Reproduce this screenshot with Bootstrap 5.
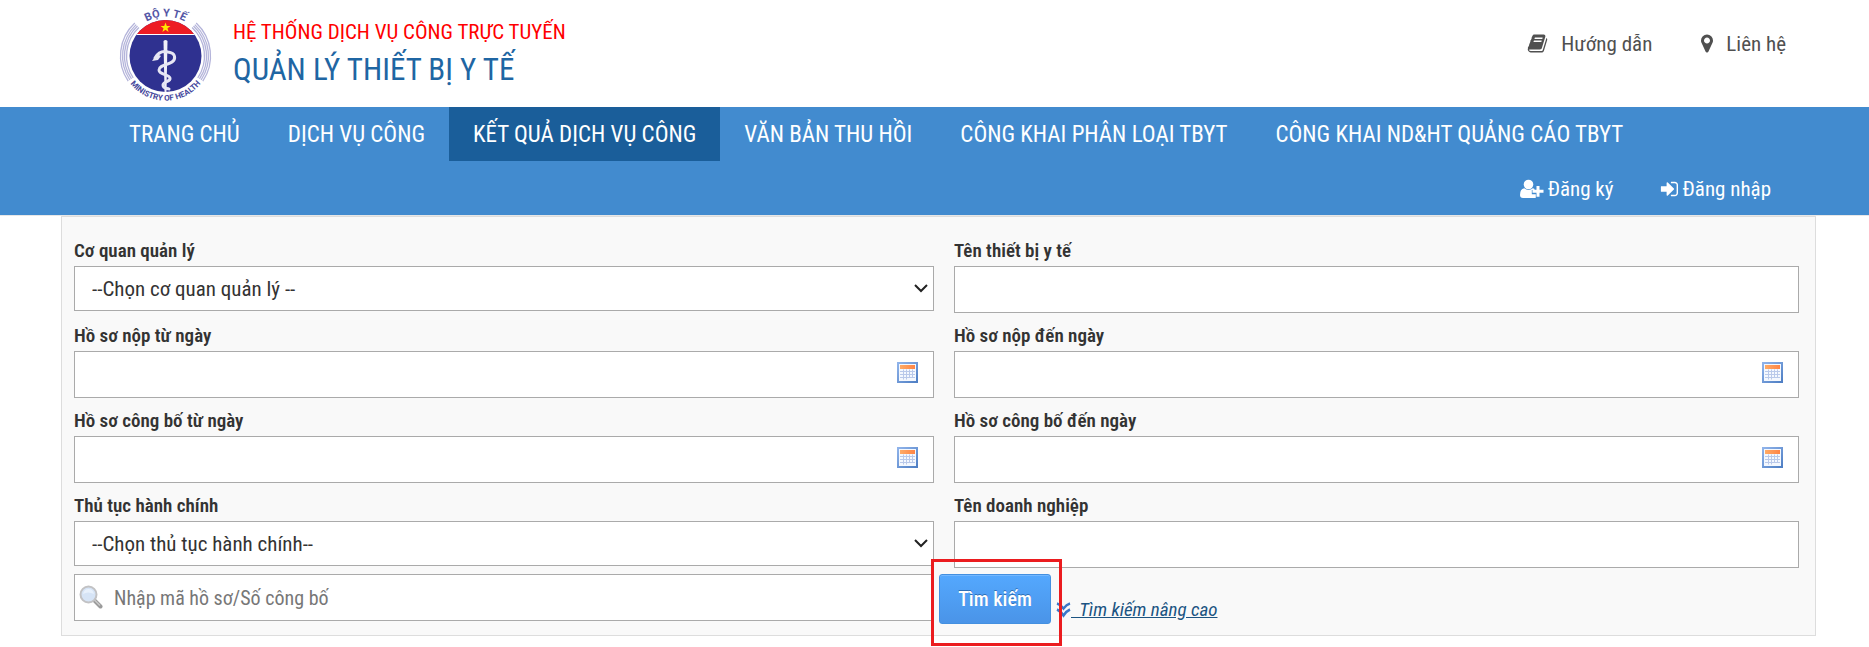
<!DOCTYPE html>
<html lang="vi">
<head>
<meta charset="utf-8">
<meta name="viewport" content="width=device-width, initial-scale=1">
<title>Quản lý thiết bị y tế</title>
<link rel="stylesheet" href="https://cdn.jsdelivr.net/npm/bootstrap@5.3.0/dist/css/bootstrap.min.css">
<script src="https://cdn.jsdelivr.net/npm/bootstrap@5.3.0/dist/js/bootstrap.bundle.min.js"></script>
<style>
body{font-family:"Roboto Condensed",Roboto,sans-serif;font-size:20px;line-height:24px;color:#333;background:#fff}
a{text-decoration:none}
.site-head{padding:10px 83px 6px 120px}
.emblem{overflow:visible}
.brand-text{margin:0 0 4px 22px}
.brand-sys{color:#f00;font-size:21px;line-height:32px}
.brand-name{color:#1f66a3;font-size:31px;line-height:44px}
.head-links{gap:49px;margin-bottom:24px;font-size:21px}
.head-links a{color:#505050;gap:13px}
.site-nav{background:#428bcf;border-bottom:1px solid #e7e7e7}
.site-nav .nav-link{color:#fff;line-height:52px;padding:2px 23px 0}
.main-menu{padding-left:105px}
.main-menu .nav-link{font-size:23px;padding:2px 24px 0}
.main-menu .nav-link.active{background:#1a5e9a}
.user-menu{padding-right:75px}
.user-menu .nav-link{font-size:21px;gap:4px}
.search-panel{margin:0 53px 0 61px;padding:22px 16px 11px 12px;background:#f9f9f9;border:1px solid #ddd}
.field-grid{display:grid;grid-template-columns:860fr 845fr;column-gap:20px}
.field-cell{height:85px}
.field-cell label{font-size:19px;font-weight:600;line-height:24px;padding-bottom:3px;display:block}
.field-cell.last-row{height:80px}
.box{display:block;width:100%;height:47px;border:1px solid #aaa;border-radius:0;background-color:#fff;padding:0 16px;font-size:20px;line-height:24px;color:#333}
select.box{height:45px;font-size:21px;appearance:none;padding:0 30px 0 17px;background-image:url("data:image/svg+xml,%3Csvg xmlns='http://www.w3.org/2000/svg' viewBox='0 0 14 9'%3E%3Cpath d='M1 1l6 6 6-6' fill='none' stroke='%23222' stroke-width='2'/%3E%3C/svg%3E");background-repeat:no-repeat;background-position:right 5px center;background-size:14px 9px}
.cal-btn{position:absolute;right:16px;top:11px;width:21px;height:21px;padding:0;border:0;background:none;line-height:0}
.code-box{padding-left:39px}
.code-box::placeholder{color:#777;opacity:1}
.lens{position:absolute;left:5px;top:11px}
.actions{margin-left:-15px}
.find-btn{width:112px;height:50px;padding:0;border:1px solid #4490e0;border-radius:3px;background:linear-gradient(#54a8fe,#4a94e8);box-shadow:inset 0 1px 0 #74b8ff;color:#fff;font-size:20px;font-weight:500;text-shadow:0 -1px 0 #2f6fb5}
.marked-area{position:absolute;left:-8px;top:-15px;width:131px;height:87px;border:3px solid #eb1c1f;pointer-events:none}
.more-link{color:#1b5482;font-size:19px;font-style:italic;margin-left:5px;margin-top:22px}
.more-link:hover{color:#0d3d66}
.more-link span{text-decoration:underline;white-space:pre}
.page-body{padding-bottom:11px}
</style>
</head>
<body>
<header class="site-head d-flex align-items-center justify-content-between">
  <a href="#" class="d-flex align-items-center">
    <svg class="emblem" width="91" height="91" viewBox="0 0 91 91" role="img" aria-label="Bộ Y Tế">
      <defs>
        <clipPath id="disc"><circle cx="45.500" cy="46" r="36"/></clipPath>
        <path id="arcTop" d="M11 28A38.500 38.500 0 0 1 80 28"/>
        <path id="arcLow" d="M4 63A45 45 0 0 0 87 63"/>
        <path id="rings" fill="none" stroke="#b4b4da" stroke-width="1.300" d="M8.200 71.200A45 45 0 0 1 14.800 13.100M9.900 70A43 43 0 0 1 16.200 14.600M11.500 68.900A41 41 0 0 1 17.500 16M13.200 67.800A39 39 0 0 1 18.900 17.500"/>
      </defs>
      <use href="#rings"/>
      <use href="#rings" transform="matrix(-1 0 0 1 91 0)"/>
      <g clip-path="url(#disc)">
        <rect width="91" height="91" fill="#2f3190"/>
        <rect width="91" height="24" fill="#ed1c24"/>
        <rect y="24" width="91" height="1" fill="#fff"/>
      </g>
      <path fill="#ffe600" d="M45.500 12.500l1.300 3.500h3.700l-3 2.300 1.100 3.700-3.100-2.200-3.100 2.200 1.100-3.700-3-2.300h3.700z"/>
      <path d="M43.500 31q2-2 4 0l-1 51h-2z" fill="#f0f0f8"/>
      <path d="M35 48c4-7 9-7 13-6 8 1 8 7 4 10-4 3-13 3-13 8s10 4 11 8-7 3-7 7 4 3 6 4" fill="none" stroke="#e6e6f4" stroke-width="3" stroke-linecap="round"/>
      <path d="M32 51l5-7 4 2-3 4z" fill="#e6e6f4"/>
      <text font-family="Roboto" font-size="11" font-weight="700" fill="#5557a6"><textPath href="#arcTop" startOffset="50%" text-anchor="middle">BỘ Y TẾ</textPath></text>
      <text font-family="Roboto" font-size="8" font-weight="700" fill="#45479c"><textPath href="#arcLow" startOffset="50%" text-anchor="middle">MINISTRY OF HEALTH</textPath></text>
    </svg>
    <div class="brand-text">
      <div class="brand-sys">HỆ THỐNG DỊCH VỤ CÔNG TRỰC TUYẾN</div>
      <div class="brand-name">QUẢN LÝ THIẾT BỊ Y TẾ</div>
    </div>
  </a>
  <div class="head-links d-flex">
    <a href="#" class="d-flex align-items-center">
      <svg width="21" height="21" viewBox="0 0 1792 1792" fill="currentColor" aria-hidden="true"><path d="M1703 478q40 57 18 129l-275 906q-19 64-76.500 107.500t-122.500 43.500h-923q-77 0-148.500-53.500t-99.500-131.500q-24-67-2-127 0-4 3-27t4-37q1-8-3-21.500t-3-19.500q2-11 8-21t16.500-23.500 16.500-23.500q23-38 45-91.500t30-91.500q3-10 .5-30t-.5-28q3-11 17-28t17-23q21-36 42-92t25-90q1-9-2.500-32t.5-28q4-13 22-30.500t22-22.500q19-26 42.500-84.500t27.500-96.500q1-8-3-25.500t-2-26.500q2-8 9-18t18-23 17-21q8-12 16.500-30.500t15-35 16-36 19.500-32 26.500-23.500 36-11.500 47.500 5.500l-1 3q38-9 51-9h761q74 0 114 56t18 130l-274 906q-36 119-71.500 153.500t-128.500 34.500h-869q-27 0-38 15-11 16-1 43 24 70 144 70h923q29 0 56-15.500t35-41.500l300-987q7-22 5-57 38 15 59 43zm-1064 2q-4 13 2 22.500t20 9.500h608q13 0 25.500-9.500t16.500-22.500l21-64q4-13-2-22.500t-20-9.500h-608q-13 0-25.500 9.500t-16.500 22.500zm-83 256q-4 13 2 22.500t20 9.500h608q13 0 25.500-9.500t16.500-22.500l21-64q4-13-2-22.500t-20-9.500h-608q-13 0-25.500 9.500t-16.500 22.500z"/></svg>Hướng dẫn</a>
    <a href="#" class="d-flex align-items-center">
      <svg width="12" height="21" viewBox="384 0 1024 1792" fill="currentColor" aria-hidden="true"><path d="M1152 640q0-106-75-181t-181-75-181 75-75 181 75 181 181 75 181-75 75-181zm256 0q0 109-33 179l-364 774q-16 33-47.500 52t-67.500 19-67.500-19-46.500-52l-365-774q-33-70-33-179 0-212 150-362t362-150 362 150 150 362z"/></svg>Liên hệ</a>
  </div>
</header>

<nav class="site-nav">
  <ul class="main-menu nav">
    <li><a class="nav-link" href="#">TRANG CHỦ</a></li>
    <li><a class="nav-link" href="#">DỊCH VỤ CÔNG</a></li>
    <li><a class="nav-link active" aria-current="page" href="#">KẾT QUẢ DỊCH VỤ CÔNG</a></li>
    <li><a class="nav-link" href="#">VĂN BẢN THU HỒI</a></li>
    <li><a class="nav-link" href="#">CÔNG KHAI PHÂN LOẠI TBYT</a></li>
    <li><a class="nav-link" href="#">CÔNG KHAI ND&amp;HT QUẢNG CÁO TBYT</a></li>
  </ul>
  <ul class="user-menu nav justify-content-end">
    <li><a class="nav-link d-flex align-items-center" href="#">
      <svg width="24" height="20" viewBox="0 0 24 20" fill="currentColor" aria-hidden="true"><circle cx="8.500" cy="5.500" r="4.800"/><path d="M4.200 9.300q4.300 3.200 8.600 0 1 .1 1.700.6V11h-2.700v4.200h4v3.600q-.5.200-1.300.2H3q-3 0-3-3 0-6 4.200-6.700z"/><path d="M16.500 7h3v3.800h4v3h-4v4h-3v-4h-4v-3h4z"/></svg>Đăng ký</a></li>
    <li><a class="nav-link d-flex align-items-center" href="#">
      <svg width="19" height="20" viewBox="100 0 1600 1792" fill="currentColor" aria-hidden="true"><path d="M1312 896q0 26-19 45l-544 544q-19 19-45 19t-45-19-19-45v-288h-448q-26 0-45-19t-19-45v-384q0-26 19-45t45-19h448v-288q0-26 19-45t45-19 45 19l544 544q19 19 19 45zm352-352v704q0 119-84.500 203.500t-203.500 84.500h-320q-13 0-22.500-9.500t-9.500-22.500q0-4-1-20t-.5-26.500 3-23.500 10-19.500 20.500-6.500h320q66 0 113-47t47-113v-704q0-66-47-113t-113-47h-312l-11.500-1-11.500-3-8-5.500-7-9-2-13.500q0-4-1-20t-.5-26.500 3-23.500 10-19.500 20.500-6.500h320q119 0 203.500 84.500t84.500 203.500z"/></svg>Đăng nhập</a></li>
  </ul>
</nav>

<svg class="position-absolute" width="0" height="0" aria-hidden="true">
  <defs>
    <linearGradient id="calEdge" x2="1" y2="1"><stop stop-color="#8fb3ea"/><stop offset="1" stop-color="#4f7fc4"/></linearGradient>
    <linearGradient id="calTop"><stop stop-color="#ffab66"/><stop offset="1" stop-color="#ff8546"/></linearGradient>
    <symbol id="calendar" viewBox="0 0 21 21"><rect x="1" y="1" width="19" height="19" fill="#f4f8fe" stroke="url(#calEdge)" stroke-width="2"/><rect x="3" y="3" width="15" height="4" fill="url(#calTop)"/><path d="M3 9.500h15M3 12.500h15M3 15.500h15M6.500 7.500v10M9.500 7.500v10M12.500 7.500v8M15.500 7.500v8" stroke="#b9c9ea" fill="none"/></symbol>
  </defs>
</svg>

<main class="page-body">
<form class="search-panel">
  <div class="field-grid">
    <div class="field-cell">
      <label for="agency">Cơ quan quản lý</label>
      <select id="agency" class="box"><option>--Chọn cơ quan quản lý --</option></select>
    </div>
    <div class="field-cell">
      <label for="device">Tên thiết bị y tế</label>
      <input id="device" type="text" class="box">
    </div>
    <div class="field-cell">
      <label for="sentFrom">Hồ sơ nộp từ ngày</label>
      <div class="position-relative"><input id="sentFrom" type="text" class="box"><button type="button" class="cal-btn" aria-label="Chọn ngày"><svg width="21" height="21"><use href="#calendar"/></svg></button></div>
    </div>
    <div class="field-cell">
      <label for="sentTo">Hồ sơ nộp đến ngày</label>
      <div class="position-relative"><input id="sentTo" type="text" class="box"><button type="button" class="cal-btn" aria-label="Chọn ngày"><svg width="21" height="21"><use href="#calendar"/></svg></button></div>
    </div>
    <div class="field-cell">
      <label for="pubFrom">Hồ sơ công bố từ ngày</label>
      <div class="position-relative"><input id="pubFrom" type="text" class="box"><button type="button" class="cal-btn" aria-label="Chọn ngày"><svg width="21" height="21"><use href="#calendar"/></svg></button></div>
    </div>
    <div class="field-cell">
      <label for="pubTo">Hồ sơ công bố đến ngày</label>
      <div class="position-relative"><input id="pubTo" type="text" class="box"><button type="button" class="cal-btn" aria-label="Chọn ngày"><svg width="21" height="21"><use href="#calendar"/></svg></button></div>
    </div>
    <div class="field-cell last-row">
      <label for="procedure">Thủ tục hành chính</label>
      <select id="procedure" class="box"><option>--Chọn thủ tục hành chính--</option></select>
    </div>
    <div class="field-cell last-row">
      <label for="company">Tên doanh nghiệp</label>
      <input id="company" type="text" class="box">
    </div>
    <div class="position-relative">
      <input id="code" type="text" class="box code-box" placeholder="Nhập mã hồ sơ/Số công bố" aria-label="Nhập mã hồ sơ/Số công bố">
      <svg class="lens" width="24" height="24" viewBox="0 0 24 24" aria-hidden="true"><path d="M15 15l6.500 6.500" stroke="#9a9a9a" stroke-width="4" stroke-linecap="round"/><path d="M15 14.500l6 6" stroke="#c9c9c9" stroke-width="1.500"/><circle cx="9.500" cy="9.500" r="8" fill="#d6e4f6" stroke="#c2c2c4" stroke-width="2"/><path d="M4 9q5-3 11 0-1-5-5.500-5T4 9z" fill="#e8f1fc"/></svg>
    </div>
    <div class="actions d-flex align-items-center">
      <div class="position-relative">
        <button type="submit" class="find-btn">Tìm kiếm</button>
        <div class="marked-area"></div>
      </div>
      <a href="#" class="more-link d-flex align-items-center"><svg width="15" height="16" viewBox="0 0 15 16" fill="none" stroke="#3b78c9" stroke-width="2.500" aria-hidden="true"><path d="M1 1.500q3.500 1 6.500 5 3-4 6.500-5M1 7.500q3.500 1.500 6.500 6 3-4.500 6.500-6"/></svg><span>  Tìm kiếm nâng cao</span></a>
    </div>
  </div>
</form>
</main>
</body>
</html>
